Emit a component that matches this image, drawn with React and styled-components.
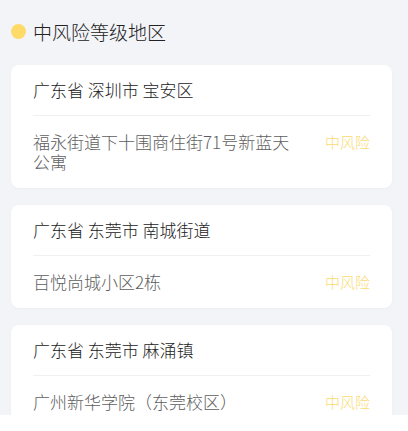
import React from "react";
import styled, { createGlobalStyle } from "styled-components";

const Global = createGlobalStyle`
  html, body { margin: 0; padding: 0; background: #ffffff; }
  body { font-family: "Noto Sans CJK SC", "Noto Sans", sans-serif; }
  * { box-sizing: border-box; }
`;

const Page = styled.div`
  width: 408px;
  height: 431px;
  display: flex;
  flex-direction: column;
  overflow: hidden;
  background: #ffffff;
`;

const Viewport = styled.div`
  height: 415px;
  overflow: hidden;
  background: #f2f4f8;
  padding: 0 16px 0 11px;
`;

const Header = styled.div`
  height: 65px;
  display: flex;
  align-items: center;
  gap: 7px;
  padding-bottom: 2px;
`;

const Dot = styled.span`
  width: 15px;
  height: 15px;
  border-radius: 50%;
  background: #fedb68;
  flex: none;
`;

const Title = styled.h2`
  margin: 0;
  font-size: 19px;
  font-weight: 300;
  line-height: 24px;
  color: #222222;
`;

const List = styled.div`
  display: flex;
  flex-direction: column;
  gap: 17px;
`;

const Card = styled.div`
  background: #ffffff;
  border-radius: 8px;
  padding: 0 22px;
  box-shadow: 0 1px 3px rgba(0, 0, 0, 0.03);
`;

const CardTitle = styled.div`
  height: 51px;
  display: flex;
  align-items: center;
  border-bottom: 1px solid #f0f0f0;
  font-size: 17px;
  font-weight: 300;
  line-height: 20px;
  color: #222222;
  padding-bottom: 1px;
`;

const Row = styled.div`
  min-height: 52px;
  display: flex;
  align-items: center;
  gap: 30px;
  padding: ${(p) => (p.$multi ? "16px 0" : "0")};
`;

const Address = styled.div`
  flex: 1;
  font-size: 17px;
  font-weight: 300;
  line-height: 20px;
  color: #5e5e5e;
`;

const Risk = styled.span`
  flex: none;
  font-size: 15px;
  font-weight: 300;
  line-height: 20px;
  color: #fcda72;
  align-self: flex-start;
  margin-top: ${(p) => (p.$multi ? "0" : "16px")};
`;

const data = [
  { area: "广东省 深圳市 宝安区", addr: "福永街道下十围商住街71号新蓝天公寓", multi: true },
  { area: "广东省 东莞市 南城街道", addr: "百悦尚城小区2栋" },
  { area: "广东省 东莞市 麻涌镇", addr: "广州新华学院（东莞校区）" },
];

export default function App() {
  return (
    <>
      <Global />
      <Page>
        <Viewport>
          <Header>
            <Dot />
            <Title>中风险等级地区</Title>
          </Header>
          <List>
            {data.map((d) => (
              <Card key={d.area}>
                <CardTitle>{d.area}</CardTitle>
                <Row $multi={d.multi}>
                  <Address>{d.addr}</Address>
                  <Risk $multi={d.multi}>中风险</Risk>
                </Row>
              </Card>
            ))}
          </List>
        </Viewport>
      </Page>
    </>
  );
}
